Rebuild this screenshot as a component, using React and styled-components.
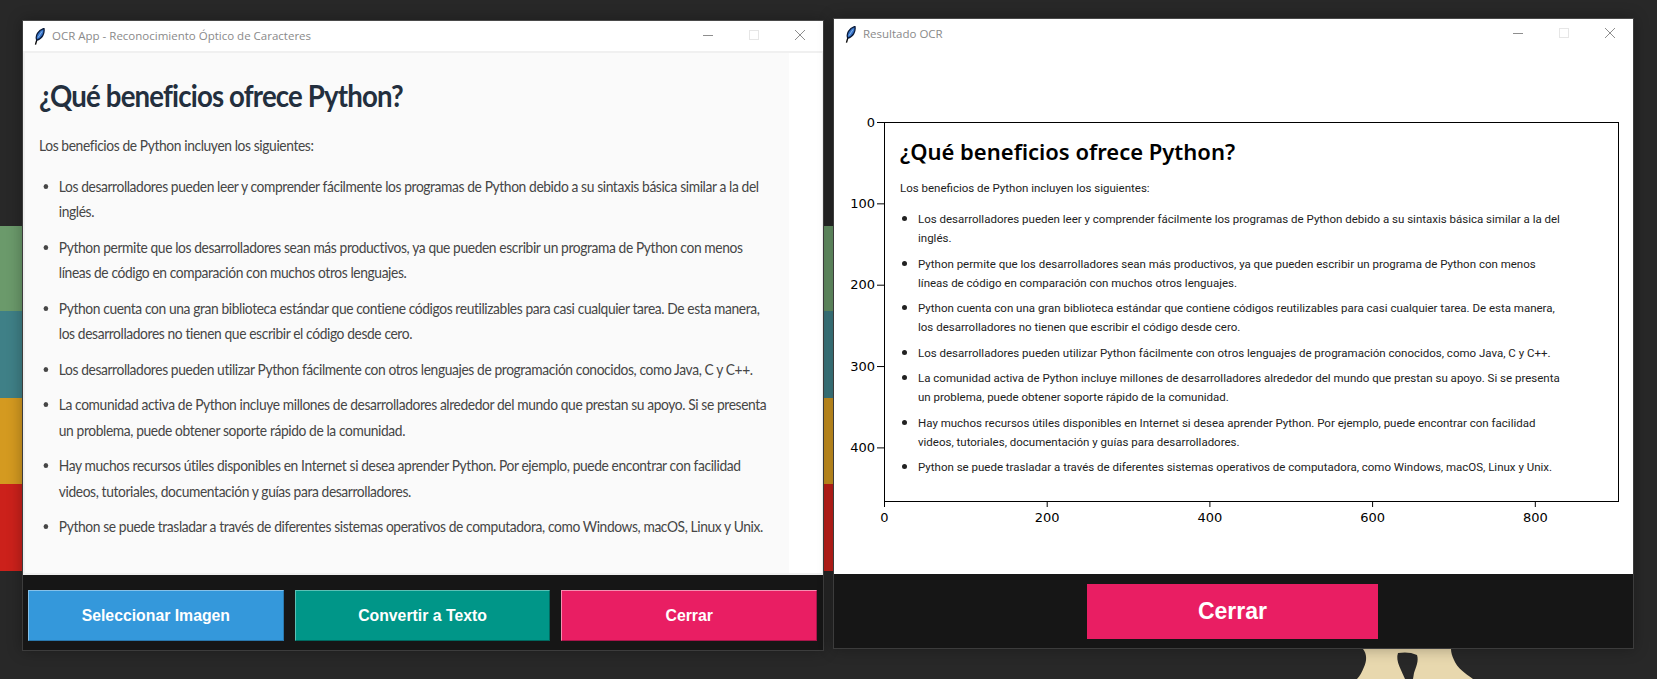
import React from 'react'
import styled, { createGlobalStyle } from 'styled-components'

const items = [
  'Los desarrolladores pueden leer y comprender fácilmente los programas de Python debido a su sintaxis básica similar a la del\ninglés.',
  'Python permite que los desarrolladores sean más productivos, ya que pueden escribir un programa de Python con menos\nlíneas de código en comparación con muchos otros lenguajes.',
  'Python cuenta con una gran biblioteca estándar que contiene códigos reutilizables para casi cualquier tarea. De esta manera,\nlos desarrolladores no tienen que escribir el código desde cero.',
  'Los desarrolladores pueden utilizar Python fácilmente con otros lenguajes de programación conocidos, como Java, C y C++.',
  'La comunidad activa de Python incluye millones de desarrolladores alrededor del mundo que prestan su apoyo. Si se presenta\nun problema, puede obtener soporte rápido de la comunidad.',
  'Hay muchos recursos útiles disponibles en Internet si desea aprender Python. Por ejemplo, puede encontrar con facilidad\nvideos, tutoriales, documentación y guías para desarrolladores.',
  'Python se puede trasladar a través de diferentes sistemas operativos de computadora, como Windows, macOS, Linux y Unix.',
]

const xTicks = [0, 200, 400, 600, 800]
const yTicks = [0, 100, 200, 300, 400]

function Feather() {
  return (
    <FeatherSvg viewBox="0 0 10 16">
      <path d="M1.2 15.6 L2.8 10" stroke="#000" strokeWidth="1.3" fill="none" />
      <path d="M2.4 11.4 C.8 7.5 3.6 2 9.2 .4 C10 5 7.6 10.2 2.4 11.4 Z" fill="#3472c8" stroke="#0a1a38" strokeWidth="1.2" />
      <path d="M3.6 9 L7.4 3.2" stroke="#9cc4f2" strokeWidth=".8" fill="none" />
    </FeatherSvg>
  )
}

function WindowControls() {
  return (
    <Controls>
      <MinIcon viewBox="0 0 10 10"><path d="M0 5.5H10" stroke="#8e8e8e" strokeWidth="1" /></MinIcon>
      <MaxIcon viewBox="0 0 10 10"><rect x=".5" y=".5" width="9" height="9" fill="none" stroke="#e6e6e6" /></MaxIcon>
      <CloseIcon viewBox="0 0 10 10"><path d="M0 0L10 10M10 0L0 10" stroke="#8e8e8e" strokeWidth="1" /></CloseIcon>
    </Controls>
  )
}

export default function App() {
  return (
    <Desktop>
      <GlobalStyle />
      <Mascot viewBox="0 0 150 30">
        <path
          fill="#e8d8ae"
          fillRule="evenodd"
          d="M23 0 C27 5 27 12 24 18 C22 23 20 27 17 30 L133 30 C125 24 117 19 114 11 C112 7 111 3 111 0 Z M58 4 C64 3 71 3 77 6 C79 12 76 18 74 24 L73 30 L65 30 C62 22 55 12 58 4 Z"
        />
      </Mascot>

      <MainWindow>
        <TitleBar>
          <Feather />
          <TitleText>OCR App - Reconocimiento Óptico de Caracteres</TitleText>
          <WindowControls />
        </TitleBar>
        <ImageArea>
          <Article>
            <ArticleText>
              <Heading>¿Qué beneficios ofrece Python?</Heading>
              <Intro>Los beneficios de Python incluyen los siguientes:</Intro>
              <List>
                {items.map((text, index) => <Item key={index}>{text}</Item>)}
              </List>
            </ArticleText>
          </Article>
        </ImageArea>
        <ButtonBar>
          <RaisedButton $bg="#3498db" $light="#85c1e9" $dark="#2a78ad">Seleccionar Imagen</RaisedButton>
          <RaisedButton $bg="#009688" $light="#5cc0b5" $dark="#00695f">Convertir a Texto</RaisedButton>
          <RaisedButton $bg="#e91e63" $light="#f48fb1" $dark="#a8154a">Cerrar</RaisedButton>
        </ButtonBar>
      </MainWindow>

      <ResultWindow>
        <ResultTitleBar>
          <Feather />
          <TitleText>Resultado OCR</TitleText>
          <WindowControls />
        </ResultTitleBar>
        <ChartArea>
          <Frame>
            <DocHeading>¿Qué beneficios ofrece Python?</DocHeading>
            <DocIntro>Los beneficios de Python incluyen los siguientes:</DocIntro>
            <DocList>
              {items.map((text, index) => <DocItem key={index}>{text}</DocItem>)}
            </DocList>
          </Frame>
          <Axes width="800" height="525">
            {xTicks.map((t) => {
              const x = 50.5 + t * 0.8135
              return (
                <g key={t}>
                  <line x1={x} x2={x} y1="452" y2="458" stroke="#000" />
                  <TickLabel x={x} y="473" textAnchor="middle">{t}</TickLabel>
                </g>
              )
            })}
            {yTicks.map((t) => {
              const y = 73.5 + t * 0.8135
              return (
                <g key={t}>
                  <line x1="43" x2="50" y1={y} y2={y} stroke="#000" />
                  <TickLabel x="41" y={y + 4} textAnchor="end">{t}</TickLabel>
                </g>
              )
            })}
          </Axes>
        </ChartArea>
        <ResultBar>
          <FlatButton>Cerrar</FlatButton>
        </ResultBar>
      </ResultWindow>
    </Desktop>
  )
}

const GlobalStyle = createGlobalStyle`
  html, body {
    margin: 0;
    padding: 0;
    background: #282828;
    overflow: hidden;
  }
`
const Desktop = styled.div`
  position: relative;
  display: flex;
  align-items: flex-start;
  gap: 9px;
  box-sizing: border-box;
  width: 1657px;
  height: 679px;
  padding-left: 22px;
  background-color: #282828;
  background-image: linear-gradient(
    #6b9a6b 0 85px,
    #3f8087 85px 172px,
    #d49a20 172px 258px,
    #cc211b 258px 345px
  );
  background-repeat: no-repeat;
  background-position: 0 226px;
  background-size: 1000px 345px;
`
const Mascot = styled.svg`
  position: absolute;
  left: 1340px;
  top: 649px;
  width: 150px;
  height: 30px;
`
const BaseWindow = styled.div`
  position: relative;
  display: flex;
  flex-direction: column;
  box-sizing: border-box;
  height: 631px;
  background: #fff;
  border: 1px solid #3c3c3c;
  border-top-color: #4a4a4a;
  box-shadow: 0 0 14px rgba(0, 0, 0, 0.3);
`
const MainWindow = styled(BaseWindow)`
  width: 802px;
  margin-top: 20px;
`
const ResultWindow = styled(BaseWindow)`
  width: 801px;
  margin-top: 18px;
`
const TitleBar = styled.div`
  display: flex;
  align-items: center;
  flex: none;
  height: 30px;
  padding-left: 11px;
`
const ResultTitleBar = styled(TitleBar)`
  padding-left: 11px;
`
const FeatherSvg = styled.svg`
  width: 11px;
  height: 17px;
  flex: none;
`
const TitleText = styled.span`
  margin: -2px 0 0 7px;
  font: 11.5px "Open Sans", sans-serif;
  color: #8a8a8a;
`
const Controls = styled.div`
  display: flex;
  align-items: center;
  gap: 36px;
  margin: -2px 0 0 auto;
  padding-right: 18px;
`
const MinIcon = styled.svg`
  width: 10px;
  height: 10px;
  display: block;
`
const MaxIcon = styled(MinIcon)``
const CloseIcon = styled(MinIcon)``
const ImageArea = styled.div`
  flex: 1;
  min-height: 0;
  display: flex;
  border: 2px solid #f0f0f0;
  border-right-width: 1px;
  background: #fff;
`
const Article = styled.div`
  box-sizing: border-box;
  width: 764px;
  padding: 22px 0 0 14px;
  background: #fafafa;
`
// the source image is squeezed sideways, so the text block is too
const ArticleText = styled.div`
  transform: scaleX(0.92);
  transform-origin: left top;
  font-family: "Lato", sans-serif;
  font-size: 15px;
  letter-spacing: -0.42px;
  color: #464646;
`
const Heading = styled.h1`
  margin: 0 0 18px;
  font-size: 30px;
  line-height: 40px;
  font-weight: 700;
  letter-spacing: -0.9px;
  color: #232f3e;
`
const Intro = styled.p`
  margin: 0 0 15px;
  line-height: 25.5px;
`
const List = styled.ul`
  margin: 0;
  padding-left: 21.5px;
`
const Item = styled.li`
  margin-bottom: 10px;
  line-height: 25.5px;
  white-space: pre;
`
const ButtonBar = styled.div`
  flex: none;
  display: flex;
  gap: 11px;
  height: 75px;
  box-sizing: border-box;
  padding: 15px 6px 9px 5px;
  background: #161616;
`
const RaisedButton = styled.button`
  flex: 1;
  padding: 0;
  border: 1px solid;
  border-color: ${(p) => p.$light} ${(p) => p.$dark} ${(p) => p.$dark} ${(p) => p.$light};
  background: ${(p) => p.$bg};
  color: #fff;
  font: bold 15.8px "Liberation Sans", sans-serif;
`
const ChartArea = styled.div`
  position: relative;
  flex: 1;
  min-height: 0;
  padding: 73px 0 0 50px;
`
const Frame = styled.div`
  box-sizing: border-box;
  width: 735px;
  height: 380px;
  padding: 13px 0 0 15px;
  border: 1.5px solid #000;
  font-family: "Roboto", sans-serif;
  font-size: 11.5px;
  color: #222;
`
const DocHeading = styled.h2`
  margin: 0 0 13px;
  font: 600 22px/30px "Noto Sans", sans-serif;
  color: #000;
`
const DocIntro = styled.p`
  margin: 0 0 11px;
  line-height: 19px;
`
const DocList = styled.ul`
  margin: 0;
  padding-left: 18px;
`
const DocItem = styled.li`
  margin-bottom: 5.5px;
  line-height: 19px;
  white-space: pre;

  &::marker {
    font-size: 15px;
  }
`
const Axes = styled.svg`
  position: absolute;
  left: 0;
  top: 0;
`
const TickLabel = styled.text`
  font: 13px "DejaVu Sans", sans-serif;
  fill: #000;
`
const ResultBar = styled.div`
  flex: none;
  display: flex;
  justify-content: center;
  height: 74px;
  box-sizing: border-box;
  padding: 10px 2px 10px 0;
  background: #161616;
`
const FlatButton = styled.button`
  width: 291px;
  height: 55px;
  padding: 0;
  border: none;
  background: #e91e63;
  color: #fff;
  font: bold 23px "Liberation Sans", sans-serif;
`
